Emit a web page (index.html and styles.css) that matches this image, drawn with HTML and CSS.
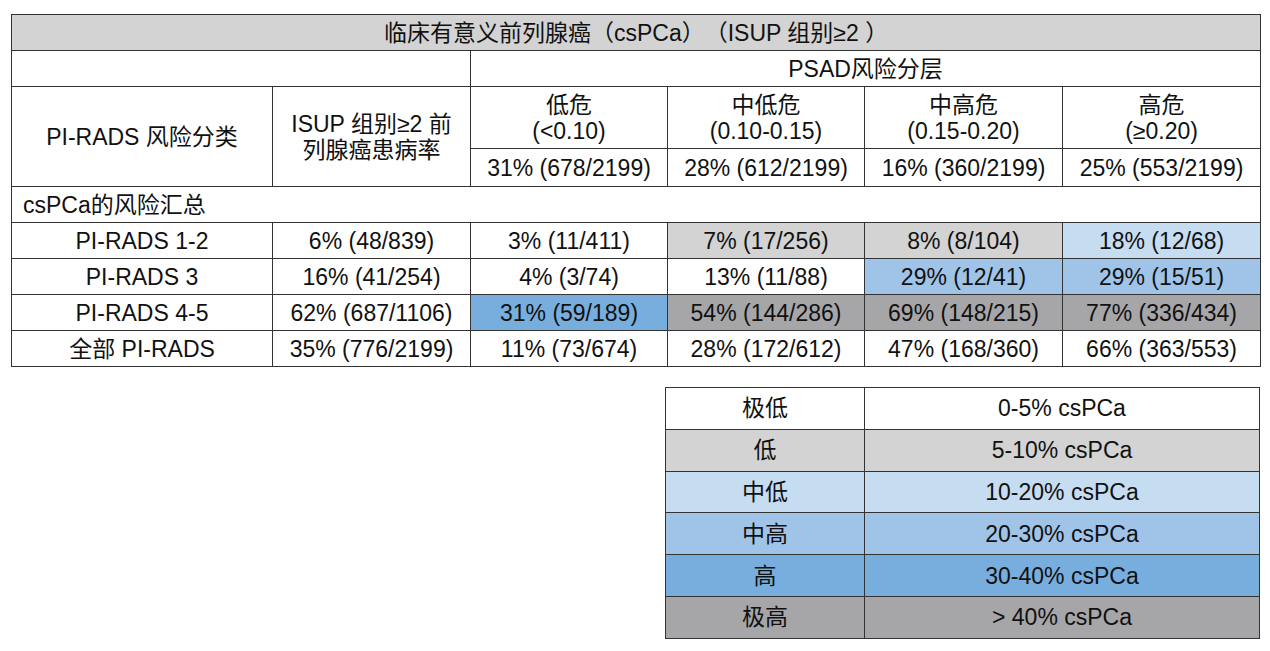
FILE: index.html
```html
<!DOCTYPE html>
<html lang="zh">
<head>
<meta charset="utf-8">
<title>csPCa PSAD</title>
<link rel="stylesheet" href="styles.css">
</head>
<body>
<div class="page">
  <table class="main">
    <colgroup>
      <col class="c1"><col class="c2"><col class="c3"><col class="c4"><col class="c5"><col class="c6">
    </colgroup>
    <tr class="r36 title">
      <td colspan="6">临床有意义前列腺癌（csPCa）（ISUP 组别≥2 ）</td>
    </tr>
    <tr class="r36">
      <td colspan="2"></td>
      <td colspan="4">PSAD风险分层</td>
    </tr>
    <tr class="r62">
      <td rowspan="2">PI-RADS 风险分类</td>
      <td rowspan="2" class="two">ISUP 组别≥2 前<br>列腺癌患病率</td>
      <td class="two">低危<br>(&lt;0.10)</td>
      <td class="two">中低危<br>(0.10-0.15)</td>
      <td class="two">中高危<br>(0.15-0.20)</td>
      <td class="two">高危<br>(≥0.20)</td>
    </tr>
    <tr class="r38">
      <td>31% (678/2199)</td>
      <td>28% (612/2199)</td>
      <td>16% (360/2199)</td>
      <td>25% (553/2199)</td>
    </tr>
    <tr class="r36">
      <td colspan="6" class="left">csPCa的风险汇总</td>
    </tr>
    <tr class="r36">
      <td>PI-RADS 1-2</td>
      <td>6% (48/839)</td>
      <td>3% (11/411)</td>
      <td class="gray">7% (17/256)</td>
      <td class="gray">8% (8/104)</td>
      <td class="lblue">18% (12/68)</td>
    </tr>
    <tr class="r36">
      <td>PI-RADS 3</td>
      <td>16% (41/254)</td>
      <td>4% (3/74)</td>
      <td>13% (11/88)</td>
      <td class="mblue">29% (12/41)</td>
      <td class="mblue">29% (15/51)</td>
    </tr>
    <tr class="r36">
      <td>PI-RADS 4-5</td>
      <td>62% (687/1106)</td>
      <td class="blue">31% (59/189)</td>
      <td class="dgray">54% (144/286)</td>
      <td class="dgray">69% (148/215)</td>
      <td class="dgray">77% (336/434)</td>
    </tr>
    <tr class="r36">
      <td>全部 PI-RADS</td>
      <td>35% (776/2199)</td>
      <td>11% (73/674)</td>
      <td>28% (172/612)</td>
      <td>47% (168/360)</td>
      <td>66% (363/553)</td>
    </tr>
  </table>

  <div class="legend-wrap">
    <table class="legend">
      <colgroup><col class="l1"><col class="l2"></colgroup>
      <tr><td>极低</td><td>0-5% csPCa</td></tr>
      <tr class="gray"><td>低</td><td>5-10% csPCa</td></tr>
      <tr class="lblue"><td>中低</td><td>10-20% csPCa</td></tr>
      <tr class="mblue"><td>中高</td><td>20-30% csPCa</td></tr>
      <tr class="blue"><td>高</td><td>30-40% csPCa</td></tr>
      <tr class="dgray"><td>极高</td><td>&gt; 40% csPCa</td></tr>
    </table>
  </div>
</div>
</body>
</html>
```

FILE: styles.css
```css
html, body {
  margin: 0;
  padding: 0;
  background: #ffffff;
}

body {
  font-family: "Liberation Sans", Arial, "Noto Sans CJK SC", sans-serif;
  color: #111111;
  font-size: 23px;
}

.page {
  padding: 14px 0 0 11px;
  width: 1249px;
}

table {
  border-collapse: collapse;
  table-layout: fixed;
}

td {
  border: 1px solid #333333;
  padding: 0;
  text-align: center;
  vertical-align: middle;
  line-height: 26px;
  white-space: nowrap;
}

.main {
  width: 1249px;
}

.c1 { width: 261px; }
.c2 { width: 198px; }
.c3 { width: 197px; }
.c4 { width: 197px; }
.c5 { width: 198px; }
.c6 { width: 198px; }

.r36 { height: 36px; }
.r62 { height: 62px; }
.r38 { height: 38px; }

.title td {
  background: #d3d3d3;
  text-spacing-trim: space-all;
}

.two {
  line-height: 26px;
}

.left {
  text-align: left;
  padding-left: 11px;
}

.gray { background: #d3d3d3; }
.dgray { background: #a6a6a9; }
.lblue { background: #c6dcf1; }
.mblue { background: #a0c4e8; }
.blue { background: #78aedd; }

.legend-wrap {
  display: flex;
  justify-content: flex-end;
  margin-top: 20px;
}

.legend {
  width: 594px;
}

.l1 { width: 199px; }
.l2 { width: 395px; }

.legend tr {
  height: 41.8px;
}
```
